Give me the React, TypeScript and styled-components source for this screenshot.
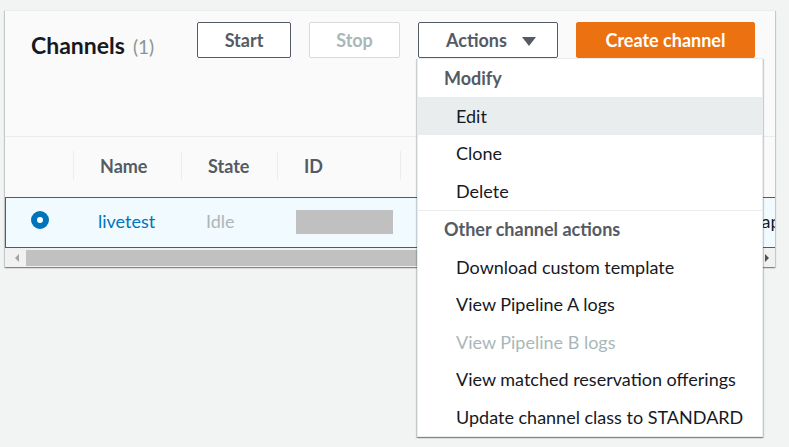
import React from 'react';
import styled, { createGlobalStyle, css } from 'styled-components';

const GlobalStyle = createGlobalStyle`
  html, body { margin: 0; padding: 0; background: #f2f3f3; }
  body { font-family: Lato, "Open Sans", sans-serif; color: #16191f; }
  * { box-sizing: border-box; }
`;

const Page = styled.div`
  width: 789px;
  height: 447px;
  padding: 10px 0 0 5px;
  overflow: hidden;
`;

const Panel = styled.section`
  width: 770px;
  background: #fafafa;
  border-top: 1px solid #eaeded;
  box-shadow: 0 1px 1px 0 rgba(0, 28, 36, 0.3), 1px 1px 1px 0 rgba(0, 28, 36, 0.15),
    -1px 1px 1px 0 rgba(0, 28, 36, 0.15);
`;

const Header = styled.header`
  display: flex;
  align-items: flex-start;
  height: 126px;
  padding: 11px 20px 0 26px;
  border-bottom: 1px solid #eaeded;
`;

const Title = styled.h2`
  margin: 9px 0 0;
  font-size: 23px;
  line-height: 28px;
  font-weight: 700;
  color: #16191f;
`;

const Count = styled.span`
  margin-left: 8px;
  font-size: 19px;
  font-weight: 400;
  color: #879596;
`;

const ButtonBar = styled.div`
  margin-left: auto;
  display: flex;
  gap: 18px;
`;

type Variant = 'normal' | 'disabled' | 'primary';

const Button = styled.button<{ $variant?: Variant; $w: number }>`
  width: ${(p) => p.$w}px;
  height: 36px;
  padding: 0;
  border-radius: 2px;
  font-family: inherit;
  font-size: 18px;
  font-weight: 700;
  display: flex;
  align-items: center;
  justify-content: center;
  gap: 15px;
  border: 1px solid #545b64;
  background: #fff;
  color: #545b64;
  ${(p) =>
    p.$variant === 'disabled' &&
    css`
      border-color: #d5dbdb;
      color: #aab7b8;
    `}
  ${(p) =>
    p.$variant === 'primary' &&
    css`
      border-color: #ec7211;
      background: #ec7211;
      color: #fff;
    `}
`;

const ActionsButton = styled(Button)`
  justify-content: flex-start;
  padding-left: 27px;
`;

const Caret = styled.span`
  width: 0;
  height: 0;
  border-left: 7px solid transparent;
  border-right: 7px solid transparent;
  border-top: 9px solid #545b64;
  margin-top: 2px;
`;

const MenuAnchor = styled.div`
  position: relative;
`;

const Menu = styled.ul`
  position: absolute;
  z-index: 5;
  top: 100%;
  left: -1px;
  width: 346px;
  margin: 0;
  padding: 0;
  list-style: none;
  background: #fff;
  border: 1px solid #eaeded;
  box-shadow: 0 1px 1px 0 rgba(0, 28, 36, 0.3), 1px 1px 1px 0 rgba(0, 28, 36, 0.15),
    -1px 1px 1px 0 rgba(0, 28, 36, 0.15);
`;

const MenuGroup = styled.li`
  & + & {
    border-top: 1px solid #eaeded;
  }
`;

const GroupLabel = styled.div<{ $tall?: boolean }>`
  height: ${(p) => (p.$tall ? '38px' : '37.5px')};
  display: flex;
  align-items: center;
  padding-left: 26px;
  font-size: 18px;
  font-weight: 700;
  color: #545b64;
`;

const MenuItem = styled.div<{ $active?: boolean; $disabled?: boolean }>`
  height: 37.5px;
  display: flex;
  align-items: center;
  padding-left: 38px;
  font-size: 18px;
  color: ${(p) => (p.$disabled ? '#aab7b8' : '#16191f')};
  background: ${(p) => (p.$active ? '#eaeded' : 'transparent')};
  white-space: nowrap;
`;

const TableScroll = styled.div`
  overflow: hidden;
`;

const HeadRow = styled.div`
  display: grid;
  grid-template-columns: 68px 108px 96px 123px 192px 400px;
  width: 987px;
  height: 60px;
`;

const HeadCell = styled.div<{ $sep?: boolean }>`
  position: relative;
  display: flex;
  align-items: center;
  padding: 0 0 3px 27px;
  font-size: 18px;
  font-weight: 700;
  color: #545b64;
  white-space: nowrap;
  ${(p) =>
    p.$sep &&
    css`
      &::before {
        content: '';
        position: absolute;
        left: 0;
        top: 14px;
        height: 29px;
        border-left: 1px solid #eaeded;
      }
    `}
`;

const BodyRow = styled.div`
  display: grid;
  grid-template-columns: 67px 108px 96px 123px 192px 400px;
  width: 987px;
  height: 51px;
  border: 1px solid #0073bb;
  background: #f1faff;
`;

const Cell = styled.div<{ $tone?: 'link' | 'muted' | 'plain'; $pad?: number }>`
  display: flex;
  align-items: center;
  padding: 0 0 4px ${(p) => p.$pad ?? 25}px;
  font-size: 18px;
  white-space: nowrap;
  color: ${(p) => (p.$tone === 'link' ? '#0073bb' : p.$tone === 'muted' ? '#aab7b8' : '#16191f')};
`;

const RadioCell = styled.div`
  display: flex;
  align-items: center;
  justify-content: center;
  padding-bottom: 5px;
`;

const Radio = styled.span`
  width: 18px;
  height: 18px;
  border-radius: 50%;
  border: 6px solid #0073bb;
  background: #fff;
`;

const Redacted = styled.span`
  width: 97px;
  height: 24px;
  margin-top: 2px;
  background: #c0c0c0;
`;

const ScrollBar = styled.div`
  display: flex;
  align-items: center;
  height: 19px;
  background: #f1f1f1;
`;

const ScrollArrow = styled.div<{ $dir: 'left' | 'right'; $disabled?: boolean }>`
  width: ${(p) => (p.$dir === 'left' ? '21px' : '17px')};
  height: 100%;
  display: flex;
  align-items: center;
  justify-content: center;
  padding-left: ${(p) => (p.$dir === 'left' ? '3px' : '0')};
  &::after {
    content: '';
    width: 0;
    height: 0;
    border-top: 4px solid transparent;
    border-bottom: 4px solid transparent;
    ${(p) =>
      p.$dir === 'left'
        ? css`border-right: 4px solid ${p.$disabled ? '#a3a3a3' : '#505050'};`
        : css`border-left: 4px solid ${p.$disabled ? '#a3a3a3' : '#505050'};`}
  }
`;

const Thumb = styled.div`
  flex: 1;
  height: 16px;
  background: #c1c1c1;
`;

const menu = [
  {
    label: 'Modify',
    items: [{ text: 'Edit', active: true }, { text: 'Clone' }, { text: 'Delete' }],
  },
  {
    label: 'Other channel actions',
    items: [
      { text: 'Download custom template' },
      { text: 'View Pipeline A logs' },
      { text: 'View Pipeline B logs', disabled: true },
      { text: 'View matched reservation offerings' },
      { text: 'Update channel class to STANDARD' },
    ],
  },
];

export default function App() {
  return (
    <Page>
      <GlobalStyle />
      <Panel>
        <Header>
          <Title>
            Channels<Count>(1)</Count>
          </Title>
          <ButtonBar>
            <Button $w={94}>Start</Button>
            <Button $w={91} $variant="disabled">
              Stop
            </Button>
            <MenuAnchor>
              <ActionsButton $w={140}>
                Actions <Caret />
              </ActionsButton>
              <Menu>
                {menu.map((group, gi) => (
                  <MenuGroup key={group.label}>
                    <GroupLabel $tall={gi === 0}>{group.label}</GroupLabel>
                    {group.items.map((item) => (
                      <MenuItem
                        key={item.text}
                        $active={'active' in item && item.active}
                        $disabled={'disabled' in item && item.disabled}
                      >
                        {item.text}
                      </MenuItem>
                    ))}
                  </MenuGroup>
                ))}
              </Menu>
            </MenuAnchor>
            <Button $w={179} $variant="primary">
              Create channel
            </Button>
          </ButtonBar>
        </Header>

        <TableScroll>
          <HeadRow>
            <HeadCell />
            <HeadCell $sep>Name</HeadCell>
            <HeadCell $sep>State</HeadCell>
            <HeadCell $sep>ID</HeadCell>
            <HeadCell $sep />
            <HeadCell $sep />
          </HeadRow>
          <BodyRow>
            <RadioCell>
              <Radio />
            </RadioCell>
            <Cell $tone="link">livetest</Cell>
            <Cell $tone="muted">Idle</Cell>
            <Cell $pad={19}>
              <Redacted />
            </Cell>
            <Cell />
            <Cell>arn:aws:medialive:ap</Cell>
          </BodyRow>
          <ScrollBar>
            <ScrollArrow $dir="left" $disabled />
            <Thumb />
            <ScrollArrow $dir="right" />
          </ScrollBar>
        </TableScroll>
      </Panel>
    </Page>
  );
}
